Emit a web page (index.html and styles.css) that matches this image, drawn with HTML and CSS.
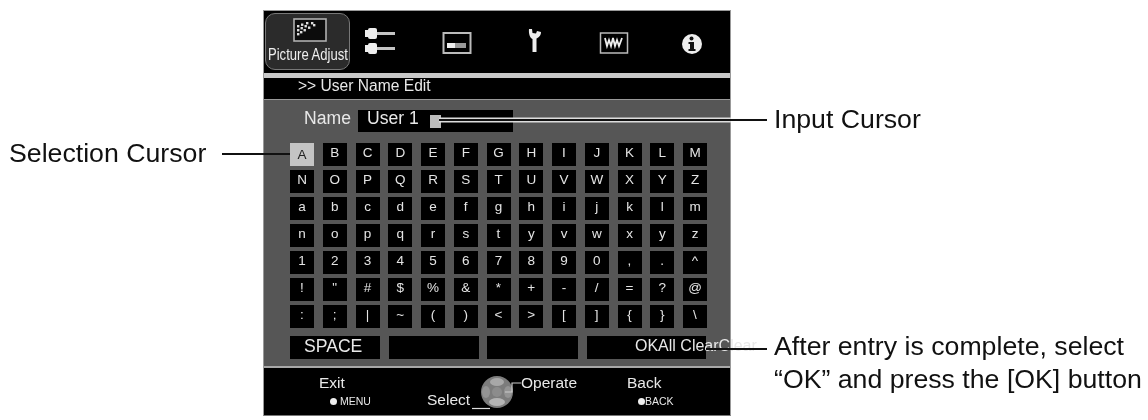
FILE: index.html
```html
<!DOCTYPE html>
<html lang="en">
<head>
<meta charset="utf-8">
<title>User Name Edit</title>
<link rel="stylesheet" href="styles.css">
</head>
<body>
<div class="stage">
  <div class="side-left"><span class="note">Selection Cursor</span></div>
  <div class="panel">
    <div class="tabs">
      <div class="tab">
        <svg class="tab-icon" viewBox="0 0 34 24"><rect x="1" y="1" width="32" height="22" fill="#0c0c0c" stroke="#b0b0b0" stroke-width="1.6"/><g fill="#ddd"><rect x="4" y="15" width="2.4" height="2.4"/><rect x="4" y="11" width="2.4" height="2.4"/><rect x="7" y="13" width="2.4" height="2.4"/><rect x="4" y="7" width="2.4" height="2.4"/><rect x="7.5" y="9" width="2.4" height="2.4"/><rect x="10.5" y="11" width="2.4" height="2.4"/><rect x="8" y="5.5" width="2.4" height="2.4"/><rect x="11.5" y="7" width="2.4" height="2.4"/><rect x="15" y="8.5" width="2.4" height="2.4"/><rect x="13" y="4" width="2.4" height="2.4"/><rect x="18" y="4" width="2.4" height="2.4"/><rect x="20" y="6" width="2.4" height="2.4"/></g></svg>
        <span class="tab-label">Picture Adjust</span>
      </div>
      <div class="icons">
        <svg class="icon" viewBox="0 0 40 40"><g fill="#eee"><rect x="5" y="9" width="3" height="7"/><rect x="8" y="7" width="9" height="11" rx="2"/><rect x="17" y="11" width="18" height="3" fill="#c4c4c4"/><rect x="5" y="24" width="3" height="7"/><rect x="8" y="22" width="9" height="11" rx="2"/><rect x="17" y="26" width="18" height="3" fill="#c4c4c4"/></g></svg>
        <svg class="icon" viewBox="0 0 40 40"><rect x="5.5" y="12" width="27" height="20" fill="none" stroke="#bbb" stroke-width="2"/><rect x="9" y="22" width="19" height="5" fill="#999"/><rect x="9" y="22" width="8" height="5" fill="#eee"/></svg>
        <svg class="icon" viewBox="0 0 40 40"><path d="M13 8L16 8L16.5 12L20 12.5L21 10L25 11C25 15 22 17 20.5 17.5L20.5 31L16.5 31L16.5 18C14 17 12.5 13 13 8z" fill="#eee"/></svg>
        <svg class="icon" viewBox="0 0 40 40"><rect x="6.5" y="12" width="27" height="20" fill="none" stroke="#bbb" stroke-width="1.5"/><path d="M11 17l2 8 2-6 2 6 2-8 2 8 2-6 2 6 3-8" fill="none" stroke="#eee" stroke-width="1.8"/></svg>
        <svg class="icon" viewBox="0 0 40 40"><circle cx="20" cy="23" r="10" fill="#eee"/><rect x="18" y="21" width="4" height="8" fill="#111"/><rect x="16.5" y="21" width="4" height="2" fill="#111"/><rect x="16.5" y="28" width="7" height="2" fill="#111"/><circle cx="19.5" cy="17.5" r="2" fill="#111"/></svg>
      </div>
    </div>
    <div class="crumb">&gt;&gt; User Name Edit</div>
    <div class="body">
      <div class="name-row">
        <span class="name-label">Name</span>
        <div class="name-field"><span class="name-value">User 1</span><span class="caret"></span></div>
      </div>
      <div class="keys">
        <span class="key selected">A</span><span class="key">B</span><span class="key">C</span><span class="key">D</span><span class="key">E</span><span class="key">F</span><span class="key">G</span><span class="key">H</span><span class="key">I</span><span class="key">J</span><span class="key">K</span><span class="key">L</span><span class="key">M</span>
        <span class="key">N</span><span class="key">O</span><span class="key">P</span><span class="key">Q</span><span class="key">R</span><span class="key">S</span><span class="key">T</span><span class="key">U</span><span class="key">V</span><span class="key">W</span><span class="key">X</span><span class="key">Y</span><span class="key">Z</span>
        <span class="key">a</span><span class="key">b</span><span class="key">c</span><span class="key">d</span><span class="key">e</span><span class="key">f</span><span class="key">g</span><span class="key">h</span><span class="key">i</span><span class="key">j</span><span class="key">k</span><span class="key">l</span><span class="key">m</span>
        <span class="key">n</span><span class="key">o</span><span class="key">p</span><span class="key">q</span><span class="key">r</span><span class="key">s</span><span class="key">t</span><span class="key">y</span><span class="key">v</span><span class="key">w</span><span class="key">x</span><span class="key">y</span><span class="key">z</span>
        <span class="key">1</span><span class="key">2</span><span class="key">3</span><span class="key">4</span><span class="key">5</span><span class="key">6</span><span class="key">7</span><span class="key">8</span><span class="key">9</span><span class="key">0</span><span class="key">,</span><span class="key">.</span><span class="key">^</span>
        <span class="key">!</span><span class="key">"</span><span class="key">#</span><span class="key">$</span><span class="key">%</span><span class="key">&amp;</span><span class="key">*</span><span class="key">+</span><span class="key">-</span><span class="key">/</span><span class="key">=</span><span class="key">?</span><span class="key">@</span>
        <span class="key">:</span><span class="key">;</span><span class="key">|</span><span class="key">~</span><span class="key">(</span><span class="key">)</span><span class="key">&lt;</span><span class="key">&gt;</span><span class="key">[</span><span class="key">]</span><span class="key">{</span><span class="key">}</span><span class="key">\</span>
      </div>
      <div class="actions">
        <div class="action space">SPACE</div>
        <div class="action blank-a"></div>
        <div class="action blank-b"></div>
        <div class="action ok">OKAll ClearClear</div>
      </div>
    </div>
    <div class="foot">
      <div class="foot-exit"><div>Exit</div><div class="hint"><span class="dot"></span>MENU</div></div>
      <div class="foot-select">Select</div>
      <svg class="knob" viewBox="0 0 49 36"><path d="M0 33.5H18" stroke="#ddd" stroke-width="1.2" fill="none"/><circle cx="25" cy="17" r="16" fill="#7c7c7c"/><ellipse cx="25" cy="7" rx="7" ry="4" fill="#a8a8a8"/><ellipse cx="25" cy="27" rx="8" ry="4" fill="#b4b4b4"/><ellipse cx="14" cy="17" rx="4" ry="6" fill="#949494"/><ellipse cx="36" cy="17" rx="4" ry="6" fill="#949494"/><circle cx="25" cy="17" r="5" fill="#8c8c8c"/><path d="M33 17H40V8H49" stroke="#ccc" stroke-width="1.2" fill="none"/></svg>
      <div class="foot-operate">Operate</div>
      <div class="foot-back"><div>Back</div><div class="hint"><span class="dot"></span>BACK</div></div>
    </div>
  </div>
  <div class="side-right">
    <div class="note input-note">Input Cursor</div>
    <div class="note after-note">After entry is complete, select<br>“OK” and press the [OK] button</div>
  </div>
  <span class="leader leader-select"></span>
  <span class="leader leader-input"></span>
  <span class="leader leader-ok"></span>
</div>
</body>
</html>
```
FILE: styles.css
```css
* { box-sizing: border-box; }
html, body { margin: 0; padding: 0; background: #fff; overflow: hidden; }
body { font-family: "Liberation Sans", Arial, sans-serif; width: 1148px; height: 420px; }

.stage { position: relative; display: flex; width: 1148px; height: 420px; padding-top: 10px; filter: blur(0.5px); }

.side-left { width: 263px; padding: 127px 0 0 9px; }
.note { font-size: 26.7px; line-height: 33px; color: #111; white-space: nowrap; }
.side-left .note { display: block; }
.side-right { padding-left: 43px; }
.input-note { padding-top: 93px; }
.after-note { padding-top: 194px; }

.panel { width: 468px; height: 406px; display: flex; flex-direction: column; background: #000; border: 1px solid #999; border-bottom-color: #777; color: #e8e8e8; }

.tabs { display: flex; height: 62px; flex: none; padding: 2px 0 0 1px; }
.tab { width: 85px; height: 57px; border: 1px solid #777; border-radius: 10px; background: #2b2b2b; display: flex; flex-direction: column; align-items: center; padding-top: 4px; }
.tab-icon { width: 34px; height: 24px; flex: none; margin-left: 4px; }
.tab-label { font-size: 17px; line-height: 20px; margin-top: 3px; white-space: nowrap; color: #eee; transform: scaleX(0.77); }
.icons { display: flex; gap: 38px; padding: 8px 0 0 10px; }
.icon { width: 40px; height: 40px; flex: none; }

.crumb { height: 27px; flex: none; border-top: 5px solid #c8c8c8; border-bottom: 1px solid #999; font-size: 15.6px; line-height: 16px; padding-left: 34px; }

.body { height: 266px; flex: none; background: #565656; padding: 10px 0 0 26px; }
.name-row { display: flex; align-items: flex-start; height: 22px; }
.name-label { width: 68px; padding-left: 14px; font-size: 17.6px; line-height: 16px; flex: none; }
.name-field { width: 155px; height: 22px; background: #000; display: flex; align-items: flex-start; padding-left: 9px; font-size: 17.6px; line-height: 16px; }
.caret { width: 11px; height: 13px; background: #bbb; margin: 5px 0 0 11px; }

.keys { display: grid; grid-template-columns: repeat(13, 24px); grid-auto-rows: 23px; column-gap: 8.75px; row-gap: 4px; margin-top: 11px; }
.key { background: #000; display: flex; align-items: center; justify-content: center; font-size: 13.5px; line-height: 20px; padding-bottom: 3px; color: #e4e4e4; }
.key.selected { background: #c4c4c4; color: #222; padding-bottom: 0; }

.actions { display: flex; height: 23px; margin-top: 8px; }
.action { background: #000; height: 23px; flex: none; }
.space { width: 90px; margin-right: 9px; padding-left: 14px; font-size: 17.6px; line-height: 20px; }
.blank-a { width: 90px; margin-right: 8px; }
.blank-b { width: 91px; margin-right: 9px; }
.ok { width: 119px; padding-left: 48px; font-size: 16px; line-height: 20px; white-space: nowrap; }

.foot { flex: 1; border-top: 2px solid #a8a8a8; display: flex; font-size: 15.5px; }
.foot-exit { margin-left: 55px; width: 58px; padding-top: 5px; line-height: 19px; }
.hint { display: flex; align-items: center; font-size: 10.5px; line-height: 13px; margin-top: 3px; }
.foot-exit .hint { padding-left: 11px; }
.dot { width: 7px; height: 7px; border-radius: 50%; background: #eee; margin-right: 3px; flex: none; }
.foot-select { margin-left: 50px; padding-top: 22px; width: 45px; line-height: 19px; }
.knob { width: 49px; height: 36px; margin-top: 7px; flex: none; }
.foot-operate { width: 106px; padding-top: 5px; line-height: 19px; }
.foot-back { padding-top: 5px; line-height: 19px; }
.foot-back .hint { padding-left: 11px; }
.foot-back .dot { margin-right: 0; }

.leader { position: absolute; height: 2px; background: #111; }
.leader-select { left: 222px; width: 68px; top: 153px; }
.leader-input { left: 439px; width: 292px; top: 119px; box-shadow: 0 -1.5px 0 #ddd, 0 1.5px 0 #ddd; }
.leader-input::after { content: ""; position: absolute; left: 100%; top: 0; width: 36px; height: 2px; background: #111; }
.leader-ok { left: 706px; width: 61px; top: 348px; }
```
